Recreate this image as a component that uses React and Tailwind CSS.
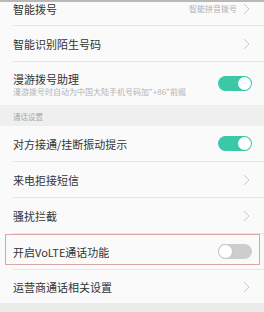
import React from "react";

const font = { fontFamily: '"Noto Sans CJK SC", "Noto Sans", sans-serif' };

function Chevron() {
  return (
    <svg width="7" height="12" viewBox="0 0 7 12" className="shrink-0">
      <polyline points="1,1 6,6 1,11" fill="none" stroke="#c9c9c9" strokeWidth="1" />
    </svg>
  );
}

function ToggleOn() {
  return (
    <div className="w-[34px] h-[15px] rounded-full bg-[#3cc8a6] flex items-center justify-end pr-[1px] shrink-0">
      <div className="w-[13px] h-[13px] rounded-full bg-white" />
    </div>
  );
}

function ToggleOff() {
  return (
    <div className="w-[34px] h-[15px] rounded-full bg-[#cdcdcd] flex items-center justify-start shrink-0">
      <div className="w-[15px] h-[15px] rounded-full bg-white border border-[#c4c4c4]" />
    </div>
  );
}

function Divider() {
  return (
    <div className="bg-[#fafafa] pl-[13px]">
      <div className="h-px bg-[#e6e6e6]" />
    </div>
  );
}

function Row({ title, right, h = "h-[35px]" }) {
  return (
    <div className={`${h} flex items-center justify-between pl-[13px] pr-[12px] bg-[#fafafa]`}>
      <span className="text-[11px] leading-[14px] text-[#333333]">{title}</span>
      {right}
    </div>
  );
}

export default function App() {
  return (
    <div className="w-[264px] h-[312px] bg-[#ececec] overflow-hidden" style={font}>
      <div className="h-[2px] bg-[#b8b8b8]" />
      {/* Row 1 partially cut */}
      <div className="h-[23px] bg-[#fafafa] pl-[13px] pr-[14px]">
        <div className="h-[14px] flex items-center justify-between">
          <span className="text-[11px] leading-[14px] text-[#333333]">智能拨号</span>
          <div className="flex items-center gap-[6px]">
            <span className="text-[8px] leading-[10px] text-[#b0b0b0]">智能拼音拨号</span>
            <Chevron />
          </div>
        </div>
      </div>
      <Divider />
      <div className="h-[35px] flex items-center justify-between pl-[13px] pr-[14px] bg-[#fafafa]">
        <span className="text-[11px] leading-[14px] text-[#333333]">智能识别陌生号码</span>
        <Chevron />
      </div>
      <Divider />
      {/* Roaming row */}
      <div className="h-[43px] flex items-center justify-between pl-[13px] pr-[12px] bg-[#fafafa]">
        <div className="self-start pt-[10px] flex flex-col">
          <span className="text-[11px] leading-[14px] text-[#333333]">漫游拨号助理</span>
          <span className="mt-[1px] text-[8px] leading-[10px] text-[#b3b3b3]">漫游拨号时自动为中国大陆手机号码加"+86"前缀</span>
        </div>
        <ToggleOn />
      </div>
      {/* Section header */}
      <div className="h-[21px] bg-[#efefef] flex items-end pl-[13px] pb-[5px]">
        <span className="text-[7.5px] leading-[8px] text-[#a8a8a8]">通话设置</span>
      </div>
      <Row title="对方接通/挂断振动提示" right={<ToggleOn />} />
      <Divider />
      <div className="h-[35px] flex items-center justify-between pl-[13px] pr-[14px] bg-[#fafafa]">
        <span className="text-[11px] leading-[14px] text-[#333333]">来电拒接短信</span>
        <Chevron />
      </div>
      <Divider />
      <div className="h-[35px] flex items-center justify-between pl-[13px] pr-[14px] bg-[#fafafa]">
        <span className="text-[11px] leading-[14px] text-[#333333]">骚扰拦截</span>
        <Chevron />
      </div>
      <Divider />
      <div className="relative h-[35px] flex items-center justify-between pl-[13px] pr-[12px] bg-[#fafafa]">
        <span className="text-[11px] leading-[14px] text-[#333333]">开启VoLTE通话功能</span>
        <ToggleOff />
        <div className="absolute left-[5px] top-0 w-[255px] h-[31px] border border-[#dba6a6]" />
      </div>
      <Divider />
      <div className="h-[33px] flex items-center justify-between pl-[13px] pr-[14px] bg-[#fafafa]">
        <span className="text-[11px] leading-[14px] text-[#333333]">运营商通话相关设置</span>
        <Chevron />
      </div>
    </div>
  );
}
